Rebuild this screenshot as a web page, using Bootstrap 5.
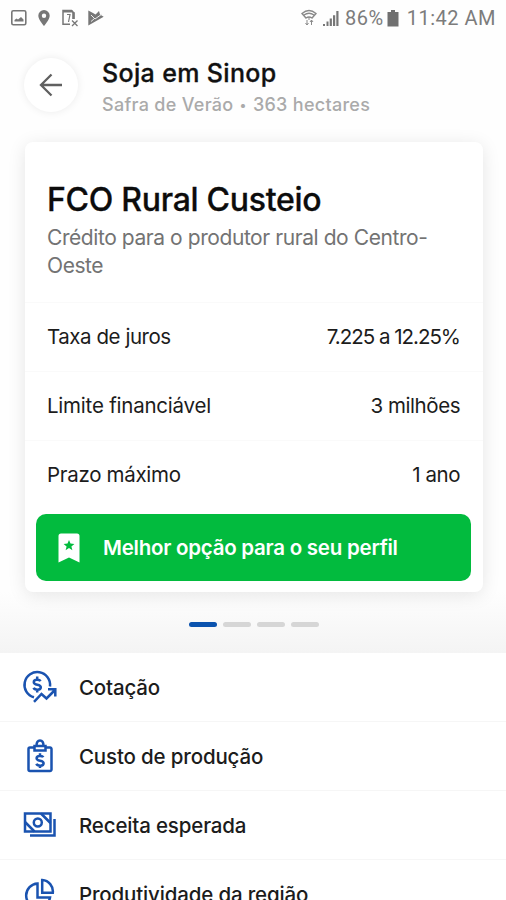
<!DOCTYPE html>
<html lang="pt-BR">
<head>
<meta charset="utf-8">
<meta name="viewport" content="width=device-width, initial-scale=1">
<title>Soja em Sinop</title>
<link href="https://cdn.jsdelivr.net/npm/bootstrap@5.3.0/dist/css/bootstrap.min.css" rel="stylesheet">
<style>
body{font-family:Inter,"Liberation Sans",sans-serif;color:#1c1c1c;background:#fefefe}
.screen{height:900px}
.statusbar{height:36px;padding:0 10px 0 10px;color:#7c7c7c;font:20px/36px Roboto,sans-serif}
.notices{gap:8px}
.charge{letter-spacing:.5px;margin-left:5px}
.signal{margin-left:5px}
.cell{margin-left:3px}
.clock{letter-spacing:.5px;margin-left:8px}
.topbar{height:106px;padding:21px 24px 0}
.back{width:54px;height:54px;margin-top:1px;background:#fff;box-shadow:0 0 9px rgba(0,0,0,.08)}
.heading{margin-left:24px}
.heading h1{font-size:25px;line-height:32px;font-weight:500;letter-spacing:.35px;color:#111;-webkit-text-stroke:.3px #111}
.heading p{font-size:18px;line-height:31px;font-weight:500;letter-spacing:.29px;color:#aaa}
.dot{font-size:13px;line-height:1;vertical-align:1px;margin:0 1px}
.carousel-zone{height:511px;padding:0 23px 0 25px;background:linear-gradient(#fefefe 88%,#f4f4f4)}
.offer{height:450px;border-radius:8px;background:#fff;box-shadow:0 3px 18px rgba(0,0,0,.1)}
.offer-head{height:160px;padding:38px 22px 0}
.offer-head h2{font-size:32px;line-height:40px;font-weight:500;letter-spacing:-.28px;color:#0c0c0c;-webkit-text-stroke:.3px #0c0c0c}
.offer-head p{font-size:21px;line-height:28px;letter-spacing:-.43px;color:#737373;margin-top:4px}
.term{height:69px;padding:1px 23px 0 22px;font-size:20.5px;letter-spacing:-.22px;border-top:1px solid #fafafa}
.term .tight{letter-spacing:-1px}
.term .snug{letter-spacing:-.45px}
.term .wide{letter-spacing:-.3px}
.best{height:67px;margin:5px 12px 0 11px;border-radius:10px;background:#02bb3e;color:#fff;font-size:20.5px;font-weight:600;letter-spacing:-.25px;padding-left:22px;gap:23px}
.best span{padding-top:2px}
.pager{gap:6px;padding-top:30px;margin-right:1px}
.pager i{width:28px;height:5px;border-radius:3px;background:#d6d6d6}
.pager i.on{background:#0b53ae}
.option{height:69px;padding-left:22px;gap:22px;font-size:20.5px;font-weight:500;letter-spacing:-.16px;border-bottom:1px solid #f6f6f6;background:#fff}
.option span{padding-top:2px}
.option svg{fill:none;stroke:#1a53b0;stroke-width:2.5}
</style>
</head>
<body>
<div class="screen overflow-hidden d-flex flex-column">
  <div class="statusbar d-flex align-items-center justify-content-between flex-shrink-0">
    <div class="notices d-flex align-items-center">
      <svg width="18" height="18" viewBox="0 0 18 18"><rect x="1.800" y="1.800" width="14" height="14" rx="1.5" fill="none" stroke="#777" stroke-width="1.6"/><path d="M4.500 12.500V11l2-1.500 1.500 1 3-2.500 2.500 2.500v2z" fill="#777"/></svg>
      <svg width="18" height="18" viewBox="0 0 18 18"><path fill="#777" fill-rule="evenodd" d="M8 1a5.700 5.700 0 0 0-5.700 5.700C2.300 10.500 8 17 8 17s5.700-6.500 5.700-10.300A5.700 5.700 0 0 0 8 1zm0 3.600a2.200 2.200 0 1 1 0 4.400 2.200 2.200 0 0 1 0-4.400z"/></svg>
      <svg width="18" height="18" viewBox="0 0 18 18" fill="none" stroke="#777" stroke-width="1.500"><path d="M8 15.200H1V1.500H9.500L12 4v6"/><path d="M1 2.300h9.500M11.300 3v7" stroke-width="2.200"/><path d="M5 5.500h3L6.500 13" stroke-width="1.200"/><path d="M10 11.500l5.500 5.500M15.500 11.500L10 17" stroke-width="1.300"/></svg>
      <svg width="18" height="18" viewBox="0 0 18 18"><path fill="#777" d="M.3 1.500L5 4l2.500 1.500L11 2l1 3.500 3.700 2.300L.3 16.500z"/><path d="M3 6l4 4 7-5M3 12.500l3.500-3" fill="none" stroke="#eee" stroke-width="1"/></svg>
    </div>
    <div class="d-flex align-items-center">
      <svg width="16" height="18" viewBox="0 0 16 18" fill="none" stroke="#8a8a8a" stroke-width="1.400"><path d="M1 4.500Q8-1.500 15 4.500L11 9Q8 7 5 9zM3 6q5-3.500 10 0"/><path d="M8 8v3M6 11v5M4.500 14L6 16l1.500-2M10.500 16v-5M9 13l1.500-2 1.500 2" stroke-width="1"/></svg>
      <svg class="signal" width="18" height="17" viewBox="0 0 18 17" fill="#777"><path d="M1 14h2v2H1zM4.500 11.500h2V16h-2zM7.700 8.500h2.200V16H7.700zM11 5.200h2.200V16H11zM14.300 1h2.200v15h-2.200z"/></svg>
      <span class="charge">86%</span>
      <svg class="cell" width="12" height="17" viewBox="0 0 12 17" fill="#707070"><path d="M4 0h4v2h3.500v14.500H.5V2H4z"/></svg>
      <span class="clock">11:42 AM</span>
    </div>
  </div>

  <header class="topbar d-flex align-items-start flex-shrink-0">
    <div class="back rounded-circle d-flex align-items-center justify-content-center flex-shrink-0">
      <svg width="24" height="24" viewBox="0 0 24 24" fill="none" stroke="#606060" stroke-width="2.300"><path d="M23 12H2M12.500 1.500L2 12l10.500 10.500"/></svg>
    </div>
    <div class="heading">
      <h1 class="mb-0">Soja em Sinop</h1>
      <p class="mb-0">Safra de Verão <span class="dot">•</span> 363 hectares</p>
    </div>
  </header>

  <main class="carousel-zone flex-shrink-0">
    <section class="offer">
      <div class="offer-head">
        <h2 class="mb-0">FCO Rural Custeio</h2>
        <p class="mb-0">Crédito para o produtor rural do Centro-<br>Oeste</p>
      </div>
      <div class="term d-flex align-items-center justify-content-between"><span class="snug">Taxa de juros</span><span class="tight">7.225 a 12.25%</span></div>
      <div class="term d-flex align-items-center justify-content-between"><span>Limite financiável</span><span class="snug">3 milhões</span></div>
      <div class="term d-flex align-items-center justify-content-between"><span class="wide">Prazo máximo</span><span class="snug">1 ano</span></div>
      <div class="best d-flex align-items-center">
        <svg width="22" height="30" viewBox="0 0 22 30"><path fill="#fff" d="M3 0.500h16a2.500 2.500 0 0 1 2.500 2.500v26.500L11 24.500.5 29.500V3A2.500 2.500 0 0 1 3 .5z"/><path fill="#02bb3e" d="M11 7l1.500 3.600 3.900.3-3 2.500 1 3.800-3.400-2.100-3.400 2.100 1-3.800-3-2.500 3.900-.3z"/></svg>
        <span>Melhor opção para o seu perfil</span>
      </div>
    </section>
    <div class="pager d-flex justify-content-center"><i class="on"></i><i></i><i></i><i></i></div>
  </main>

  <nav>
    <div class="option d-flex align-items-center">
      <svg width="35" height="34" viewBox="0 0 35 34"><path d="M12 27.300A12.800 12.800 0 1 1 28 16.500M12 31.800L19.500 24l5 4.500 8-8M26 19.300h7.300V26.500"/><path d="M18.500 11.200c-.7-1.700-6.700-2.200-6.700 1 0 3.500 7 1.500 7 5 0 3.300-6.200 3-7.200.5M15.200 6.500v3M15.200 19.500v3"/></svg>
      <span>Cotação</span>
    </div>
    <div class="option d-flex align-items-center">
      <svg width="35" height="34" viewBox="0 0 35 34"><path d="M12.500 8.500H8a1.500 1.500 0 0 0-1.500 1.500v20.500A1.500 1.500 0 0 0 8 32h20a1.500 1.500 0 0 0 1.500-1.500V10A1.500 1.500 0 0 0 28 8.500h-4.500"/><path d="M12.500 11.500V7h2C14.500-.3 21.500-.3 21.500 7h2v4.500zM14.500 7h7"/><path d="M21.300 18.300c-.7-1.700-6.700-2.200-6.700 1 0 3.500 7 1.500 7 5 0 3.300-6.200 3-7.200.5M18 14.200v2.500M18 26.500v2.500"/></svg>
      <span>Custo de produção</span>
    </div>
    <div class="option d-flex align-items-center">
      <svg width="35" height="34" viewBox="0 0 35 34"><path d="M3 5.500h25.500V23.500H3zM32.500 11v16.500H8"/><circle cx="15.800" cy="14.500" r="4"/><path d="M3 14l9.500 9.500M19 5.500l9.500 9.500"/></svg>
      <span>Receita esperada</span>
    </div>
    <div class="option d-flex align-items-center">
      <svg width="35" height="34" viewBox="0 0 35 34"><path d="M15.500 6.500A12 12 0 1 0 28 20.500H15.500zM20.200 3v12.800h10.600A11.500 11.500 0 0 0 20.200 3z"/></svg>
      <span>Produtividade da região</span>
    </div>
  </nav>
</div>
<script src="https://cdn.jsdelivr.net/npm/bootstrap@5.3.0/dist/js/bootstrap.bundle.min.js"></script>
</body>
</html>
